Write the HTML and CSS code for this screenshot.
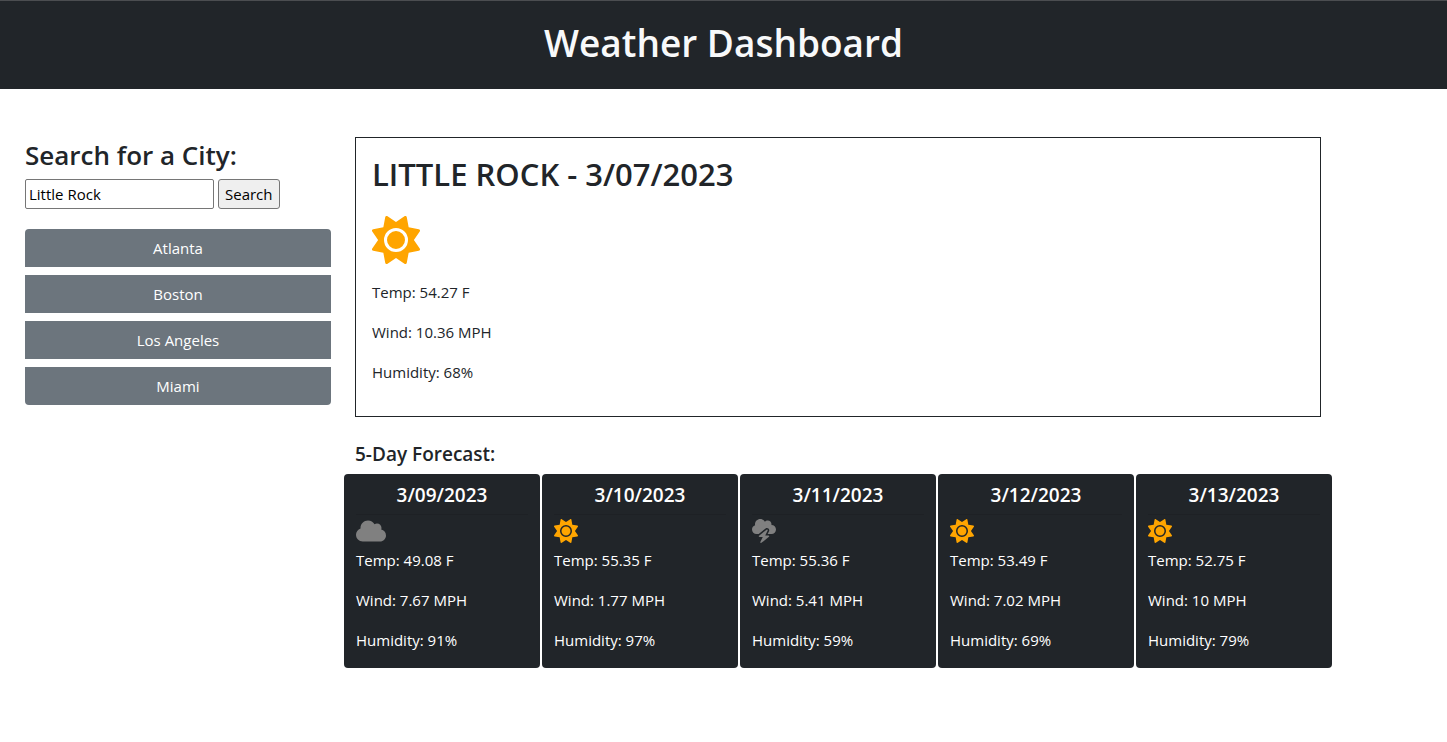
FILE: index.html
```html
<!DOCTYPE html>
<html lang="en">
<head>
<meta charset="utf-8">
<meta name="viewport" content="width=device-width, initial-scale=1">
<title>Weather Dashboard</title>
<link rel="stylesheet" href="styles.css">
</head>
<body>
<svg class="sprite" aria-hidden="true">
  <symbol id="sun" viewBox="0 0 512 512"><path d="M361.5 1.2c5 2.1 8.6 6.6 9.6 11.9L391 121l107.9 19.8c5.3 1 9.8 4.6 11.9 9.6s1.5 10.7-1.6 15.2L446.9 256l62.3 90.3c3.1 4.5 3.7 10.2 1.6 15.2s-6.6 8.6-11.9 9.6L391 391 371.1 498.9c-1 5.3-4.6 9.8-9.6 11.9s-10.7 1.5-15.2-1.6L256 446.9l-90.3 62.3c-4.5 3.1-10.2 3.7-15.2 1.6s-8.6-6.6-9.6-11.9L121 391 13.1 371.1c-5.3-1-9.8-4.6-11.9-9.6s-1.5-10.7 1.6-15.2L65.1 256 2.8 165.7c-3.1-4.5-3.7-10.2-1.6-15.2s6.6-8.6 11.9-9.6L121 121 140.9 13.1c1-5.3 4.6-9.8 9.6-11.9s10.7-1.5 15.2 1.6L256 65.1 346.3 2.8c4.5-3.1 10.2-3.7 15.2-1.6zM160 256a96 96 0 1 1 192 0 96 96 0 1 1 -192 0zm224 0a128 128 0 1 0 -256 0 128 128 0 1 0 256 0z"/></symbol>
  <symbol id="cloud" viewBox="0 0 640 512"><path d="M0 336c0 79.5 64.5 144 144 144H512c70.7 0 128-57.3 128-128c0-61.9-44-113.6-102.4-125.4c4.1-10.7 6.4-22.4 6.4-34.6c0-53-43-96-96-96c-19.7 0-38.1 6-53.3 16.2C367 64.2 315.3 32 256 32C167.6 32 96 103.6 96 192c0 2.7 .1 5.4 .2 8.1C40.2 219.8 0 273.2 0 336z"/></symbol>
  <symbol id="bolt" viewBox="0 0 512 512"><path d="M0 224c0 53 43 96 96 96h47.2L290 202.5c17.6-14.1 42.6-14 60.2 .2s22.8 38.6 12.8 58.8L333.7 320H352h64c53 0 96-43 96-96s-43-96-96-96c-.5 0-1.1 0-1.6 0c1.1-5.2 1.6-10.5 1.6-16c0-44.2-35.8-80-80-80c-24.3 0-46.1 10.9-60.8 28C256.5 24.3 219.1 0 176 0C114.1 0 64 50.1 64 112c0 7.1 .7 14.1 1.9 20.8C27.6 145.4 0 181.5 0 224zm330.1 3.6c-5.8-4.7-14.2-4.7-20.1-.1l-160 128c-5.3 4.2-7.4 11.4-5.1 17.8s8.3 10.7 15.1 10.7h70.1L177.7 488.8c-3.4 6.7-1.6 14.9 4.3 19.6s14.2 4.7 20.1 .1l160-128c5.3-4.2 7.4-11.4 5.1-17.8s-8.3-10.7-15.1-10.7H281.9l52.4-104.8c3.4-6.7 1.6-14.9-4.2-19.6z"/></symbol>
</svg>

<header class="banner"><h1>Weather Dashboard</h1></header>

<div class="layout">
  <aside class="sidebar">
    <form class="search">
      <label class="search-title" for="city">Search for a City:</label>
      <div class="search-row">
        <input id="city" class="search-input" type="text" value="Little Rock">
        <button class="search-button" type="button">Search</button>
      </div>
    </form>
    <div class="cities">
      <button class="city" type="button">Atlanta</button>
      <button class="city" type="button">Boston</button>
      <button class="city" type="button">Los Angeles</button>
      <button class="city" type="button">Miami</button>
    </div>
  </aside>

  <main class="content">
    <section class="current">
      <h2>LITTLE ROCK - 3/07/2023</h2>
      <svg class="icon-large sunny" aria-hidden="true"><use href="#sun"/></svg>
      <p>Temp: 54.27 F</p>
      <p>Wind: 10.36 MPH</p>
      <p>Humidity: 68%</p>
    </section>

    <h3 class="forecast-title">5-Day Forecast:</h3>
    <section class="forecast">
      <article class="day">
        <h4>3/09/2023</h4>
        <svg class="icon wide cloudy" aria-hidden="true"><use href="#cloud"/></svg>
        <p>Temp: 49.08 F</p>
        <p>Wind: 7.67 MPH</p>
        <p>Humidity: 91%</p>
      </article>
      <article class="day">
        <h4>3/10/2023</h4>
        <svg class="icon sunny" aria-hidden="true"><use href="#sun"/></svg>
        <p>Temp: 55.35 F</p>
        <p>Wind: 1.77 MPH</p>
        <p>Humidity: 97%</p>
      </article>
      <article class="day">
        <h4>3/11/2023</h4>
        <svg class="icon cloudy" aria-hidden="true"><use href="#bolt"/></svg>
        <p>Temp: 55.36 F</p>
        <p>Wind: 5.41 MPH</p>
        <p>Humidity: 59%</p>
      </article>
      <article class="day">
        <h4>3/12/2023</h4>
        <svg class="icon sunny" aria-hidden="true"><use href="#sun"/></svg>
        <p>Temp: 53.49 F</p>
        <p>Wind: 7.02 MPH</p>
        <p>Humidity: 69%</p>
      </article>
      <article class="day">
        <h4>3/13/2023</h4>
        <svg class="icon sunny" aria-hidden="true"><use href="#sun"/></svg>
        <p>Temp: 52.75 F</p>
        <p>Wind: 10 MPH</p>
        <p>Humidity: 79%</p>
      </article>
    </section>
  </main>
</div>
</body>
</html>
```

FILE: styles.css
```css
* { box-sizing: border-box; }

body {
  margin: 0;
  background: #fff;
  color: #212529;
  font-family: "Segoe UI", "Open Sans", "Noto Sans", sans-serif;
  font-size: 15px;
  line-height: 24px;
}

h1, h2, h3, h4, p { margin: 0; }

.sprite { display: none; }

.banner {
  padding: 18px 16px 22px;
  border-top: 1px solid #4b4d50;
  background: #212529;
  color: #f8f9fa;
  text-align: center;
}

.banner h1 {
  font-size: 37px;
  font-weight: 600;
  line-height: 48px;
}

.layout {
  display: grid;
  grid-template-columns: minmax(0, 1fr) minmax(0, 3fr);
  margin: 48px 114px 0 13px;
}

.sidebar { padding: 0 12px; }

.search-title {
  display: block;
  margin-bottom: 6px;
  font-size: 26px;
  font-weight: 600;
  line-height: 36px;
}

.search-row {
  display: flex;
  gap: 4px;
}

.search-input,
.search-button {
  height: 30px;
  border: 1px solid #767676;
  border-radius: 2px;
  color: #000;
  font: inherit;
}

.search-input {
  width: 189px;
  padding: 1px 3px;
  background: #fff;
}

.search-button {
  padding: 1px 6px;
  border-radius: 3px;
  background: #efefef;
}

.cities {
  display: flex;
  flex-direction: column;
  gap: 8px;
  margin-top: 20px;
}

.city {
  height: 38px;
  padding: 0 12px;
  border: 0;
  background: #6c757d;
  color: #fff;
  font: inherit;
}

.city:first-child { border-radius: 4px 4px 0 0; }
.city:last-child { border-radius: 0 0 4px 4px; }

.current {
  display: flex;
  flex-direction: column;
  gap: 16px;
  margin: 0 12px;
  padding: 16px 16px 32px;
  border: 1px solid #212529;
}

.current h2 {
  margin-bottom: 6px;
  font-size: 31px;
  font-weight: 600;
  line-height: 40px;
}

.icon-large {
  width: 48px;
  height: 48px;
}

.sunny { fill: #ffa500; }
.cloudy { fill: #808080; }

.forecast-title {
  margin: 24px 12px 7px;
  font-size: 19px;
  font-weight: 600;
  line-height: 26px;
}

.forecast {
  display: grid;
  grid-template-columns: repeat(5, minmax(0, 1fr));
  gap: 2px;
  padding: 0 1px;
}

.day {
  padding: 0 12px 16px;
  border-radius: 4px;
  background: #212529;
  color: #fff;
}

.day h4 {
  margin-bottom: 4px;
  padding: 9px 0 7px;
  border-bottom: 1px solid #1e2125;
  font-size: 19px;
  font-weight: 600;
  line-height: 24px;
  text-align: center;
}

.icon {
  display: block;
  width: 24px;
  height: 24px;
  margin-bottom: 5px;
}

.wide { width: 30px; }

.day p + p { margin-top: 16px; }
```
